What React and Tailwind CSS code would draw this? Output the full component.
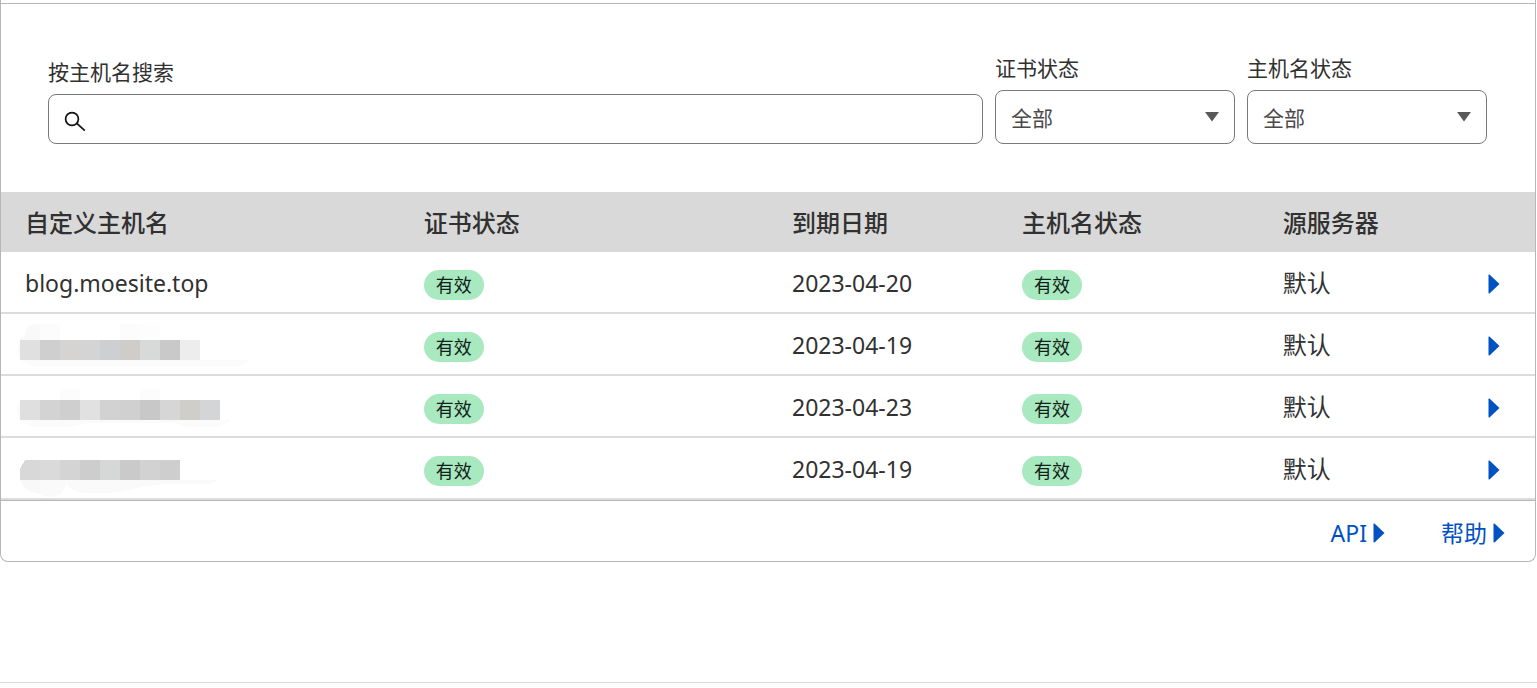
import React, { useState } from "react";

const hostnames = [
  { id: 1, name: "blog.moesite.top", expires: "2023-04-20" },
  {
    id: 2,
    expires: "2023-04-19",
    mask: {
      y: 26,
      blocks: ["#e0e0e0", "#cfcfcf", "#d6d4d2", "#d4d4d4", "#cecfd1", "#cfcdca", "#d7dad9", "#c9c9c9", "#ededed"],
      halo: [
        { d: "M3 26V24L8 22V18Q12 10 20 10H23V26Z", fill: "#f9f9f9" },
        { d: "M23 10H43V26H23ZM103 10H123V26H103Z", fill: "#fcfcfc" },
        { d: "M123 10H143V26H123Z", fill: "#fdfdfd" },
        { d: "M3 46Q-3 36 3 29ZM4 46H233Q228 52 218 52H18Q8 51 4 46Z", fill: "#fbfbfb" },
      ],
    },
  },
  {
    id: 3,
    expires: "2023-04-23",
    mask: {
      y: 24,
      blocks: ["#dfdfdf", "#d3d3d3", "#cfcfcf", "#e1e1e1", "#d2d2d2", "#d0d0d0", "#c8c8c8", "#d6d6d6", "#d0cecb", "#d3d5d7"],
      halo: [
        { d: "M43 13H63V24H43ZM123 13H143V24H123Z", fill: "#fcfcfc" },
        { d: "M3 42Q-3 34 3 26ZM5 44H214Q206 50 200 51H170Q160 47 150 47H68Q60 51 50 51H18Q8 49 5 44Z", fill: "#fbfbfb" },
      ],
    },
  },
  {
    id: 4,
    expires: "2023-04-19",
    mask: {
      y: 22,
      blocks: ["#d8d8d8", "#dadada", "#d4d4d4", "#cdcdcd", "#d5d8d7", "#cacaca", "#d2d2d2", "#cecece"],
      halo: [
        { d: "M3 42H23V56Q8 54 3 42Z", fill: "#f8f8f8" },
        { d: "M23 42H202Q196 46 188 46H148Q132 47 115 51Q100 55 88 55H68Q55 54 49 47Q45 59 33 59Q28 59 23 56Z", fill: "#fafafa" },
      ],
      cut: "M3 22H8L3 31Z",
    },
  },
];

const CaretRight = () => (
  <svg width="12" height="20" viewBox="0 0 12 20" fill="#0051c3" aria-hidden="true">
    <path d="M0.5 1.2Q0.5 0 1.5 0.6L11.5 10L1.5 19.4Q0.5 20 0.5 18.8Z" />
  </svg>
);

// mosaic that hides a private hostname
const MaskedName = ({ mask }) => (
  <svg width="240" height="60" viewBox="0 0 240 60" className="-ml-2 block" shapeRendering="crispEdges" aria-hidden="true">
    {mask.halo.map((h) => (
      <path key={h.d} d={h.d} fill={h.fill} />
    ))}
    {mask.blocks.map((fill, i) => (
      <rect key={i} x={3 + i * 20} y={mask.y} width="20" height="20" fill={fill} />
    ))}
    {mask.cut && <path d={mask.cut} fill="#fff" />}
  </svg>
);

const Badge = () => (
  <span className="block h-[30px] w-fit rounded-full bg-[#a8e9c0] px-3 text-lg leading-[30px] text-[#122018]">
    有效
  </span>
);

const FilterSelect = ({ id, label }) => (
  <div className="w-60 shrink-0">
    <label htmlFor={id} className="block pb-2 text-[21px] leading-7">
      {label}
    </label>
    <div className="relative">
      <select
        id={id}
        className="block h-[54px] w-full appearance-none rounded-lg border border-[#797979] bg-white px-[15px] pt-1 text-[21px] text-[#4a4a4a]"
      >
        <option>全部</option>
        <option>有效</option>
      </select>
      <svg
        width="14"
        height="10"
        viewBox="0 0 14 10"
        fill="#595959"
        className="pointer-events-none absolute right-4 top-[22px]"
        aria-hidden="true"
      >
        <path d="M0 0H14L7 9.5Z" />
      </svg>
    </div>
  </div>
);

const FooterLink = ({ children }) => (
  <a href="#" className="flex items-center gap-1.5 text-[23px] text-[#0051c3]">
    {children}
    <CaretRight />
  </a>
);

const App = () => {
  const [search, setSearch] = useState("");

  return (
    <div className="bg-white font-['Noto_Sans','Noto_Sans_CJK_SC',sans-serif] text-[#313131]">
      <div className="border-b border-[#d9d9d9] pb-30 pr-px">
        <section className="rounded-b-lg border-x border-b border-[#b6b6b6] pt-[3px]">
          <div className="flex items-end gap-3 border-t border-[#b6b6b6] pb-12 pl-[47px] pr-12 pt-[50px]">
            <div className="min-w-0 flex-1">
              <label htmlFor="search" className="block pb-2 text-[21px] leading-7">
                按主机名搜索
              </label>
              <div className="relative">
                <svg
                  width="22"
                  height="22"
                  viewBox="0 0 22 22"
                  fill="none"
                  stroke="#111"
                  strokeWidth="1.7"
                  className="pointer-events-none absolute left-4 top-4"
                  aria-hidden="true"
                >
                  <circle cx="8" cy="9" r="6.4" />
                  <path d="M12.6 13.2L20.8 20.6" />
                </svg>
                <input
                  id="search"
                  type="text"
                  value={search}
                  onChange={(e) => setSearch(e.target.value)}
                  className="block h-[50px] w-full rounded-lg border border-[#797979] pl-12 pr-4 text-[21px]"
                />
              </div>
            </div>
            <FilterSelect id="cert-status" label="证书状态" />
            <FilterSelect id="host-status" label="主机名状态" />
          </div>

          <table className="w-full table-fixed border-separate border-spacing-0 text-left">
            <thead>
              <tr className="h-[60px] bg-[#d9d9d9] text-2xl [&>th]:px-6 [&>th]:pb-0 [&>th]:pt-0.5 [&>th]:font-medium">
                <th className="w-[26%]">自定义主机名</th>
                <th className="w-[24%]">证书状态</th>
                <th className="w-[15%]">到期日期</th>
                <th className="w-[17%]">主机名状态</th>
                <th className="w-[12%]">源服务器</th>
                <th className="w-[6%]" />
              </tr>
            </thead>
            <tbody>
              {hostnames.map((host) => (
                <tr key={host.id} className="h-[62px] text-2xl [&>td]:border-b-2 [&>td]:border-[#dcdcdc]">
                  {host.mask ? (
                    <td className="px-6">
                      <MaskedName mask={host.mask} />
                    </td>
                  ) : (
                    <td className="px-6 pt-0.5 text-[23px]">{host.name}</td>
                  )}
                  <td className="px-6 pt-1.5">
                    <Badge />
                  </td>
                  <td className="px-6 pt-0.5 text-[23px]">{host.expires}</td>
                  <td className="px-6 pt-1.5">
                    <Badge />
                  </td>
                  <td className="px-6 pt-0.5">默认</td>
                  <td className="pr-[35px] pt-1">
                    <button type="button" aria-label="展开" className="ml-auto block">
                      <CaretRight />
                    </button>
                  </td>
                </tr>
              ))}
            </tbody>
          </table>

          <div className="flex h-[61px] items-center justify-end gap-14 border-t border-[#b6b6b6] pr-[30px] pt-1">
            <FooterLink>API</FooterLink>
            <FooterLink>帮助</FooterLink>
          </div>
        </section>
      </div>
    </div>
  );
};

export default App;
